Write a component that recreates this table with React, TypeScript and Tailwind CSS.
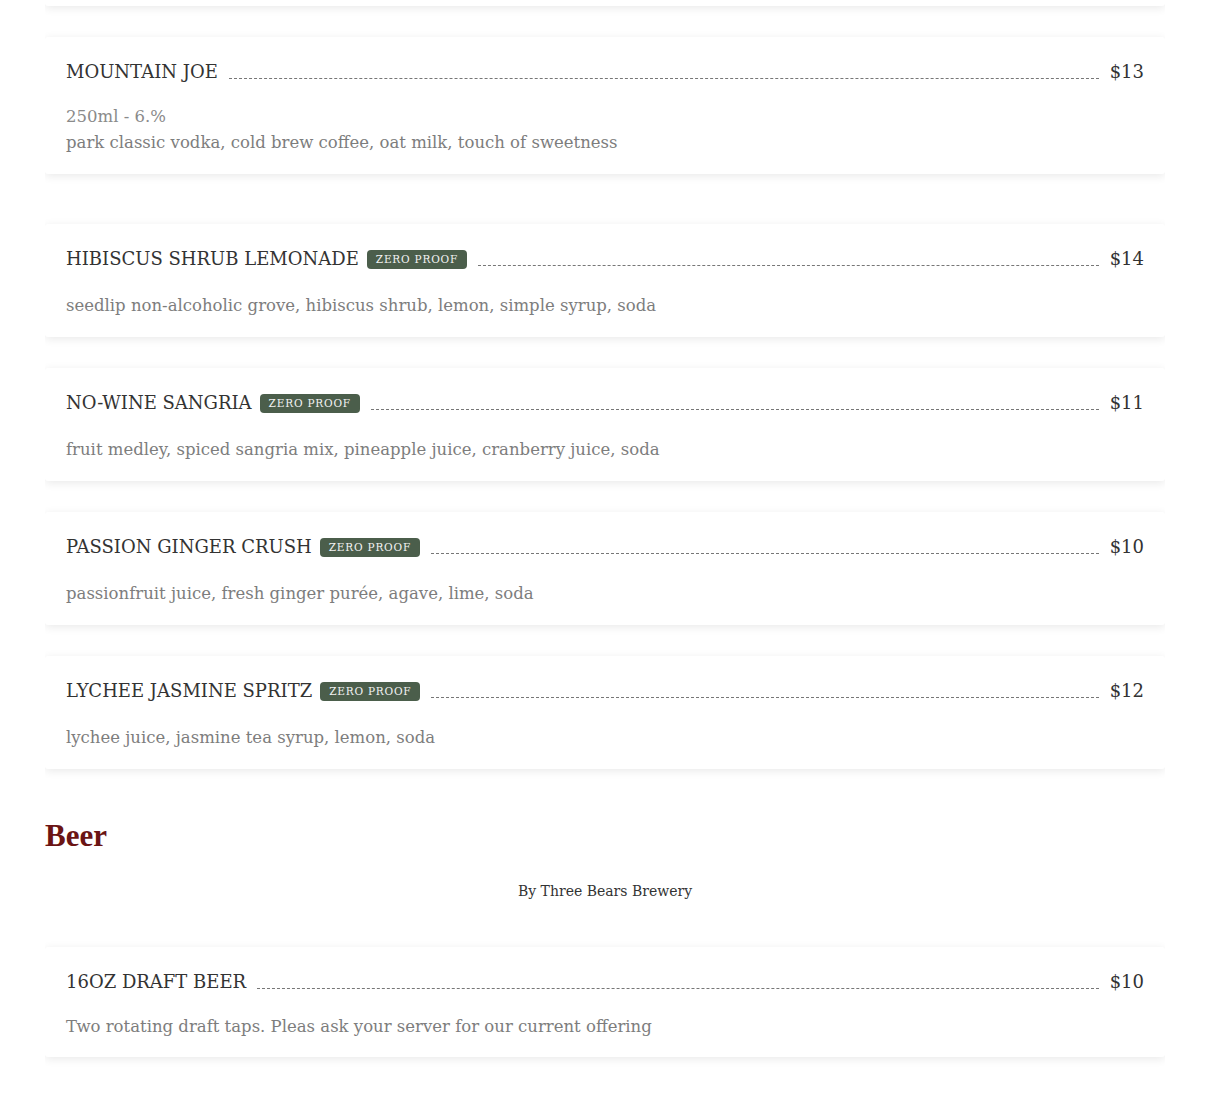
const slab = { fontFamily: '"DejaVu Serif", "Liberation Serif", serif' };

type Item = {
  name: string;
  price: string;
  desc: string;
  meta?: string;
  zero?: boolean;
  tight?: boolean;
};

const cocktails: Item[] = [
  {
    name: "Mountain Joe",
    price: "$13",
    meta: "250ml - 6.%",
    desc: "park classic vodka, cold brew coffee, oat milk, touch of sweetness",
  },
];

const zeroProof: Item[] = [
  {
    name: "Hibiscus Shrub Lemonade",
    price: "$14",
    zero: true,
    desc: "seedlip non-alcoholic grove, hibiscus shrub, lemon, simple syrup, soda",
  },
  {
    name: "No-Wine Sangria",
    price: "$11",
    zero: true,
    desc: "fruit medley, spiced sangria mix, pineapple juice, cranberry juice, soda",
  },
  {
    name: "Passion Ginger Crush",
    price: "$10",
    zero: true,
    desc: "passionfruit juice, fresh ginger purée, agave, lime, soda",
  },
  {
    name: "Lychee Jasmine Spritz",
    price: "$12",
    zero: true,
    desc: "lychee juice, jasmine tea syrup, lemon, soda",
  },
];

const beer: Item[] = [
  {
    name: "16oz Draft Beer",
    price: "$10",
    tight: true,
    desc: "Two rotating draft taps. Pleas ask your server for our current offering",
  },
];

function MenuCard({ item }: { item: Item }) {
  return (
    <div
      className={
        "rounded-[3px] bg-white px-[21px] pt-[23px] shadow-[0_2px_10px_rgba(0,0,0,0.09)] " +
        (item.tight ? "pb-[17px]" : "pb-[18px]")
      }
    >
      <div className="flex items-center">
        <h3 className="text-[18px] leading-6 uppercase text-[#333] whitespace-nowrap">
          {item.name}
        </h3>
        {item.zero && (
          <span className="ml-2 rounded-[4px] bg-[#4b5e4b] px-[9px] text-[10.5px] leading-[19px] tracking-[0.8px] uppercase text-[#f2f2f2] whitespace-nowrap">
            Zero Proof
          </span>
        )}
        <div className="mx-[11px] mt-3 h-0 flex-1 border-b border-dashed border-[#777]" />
        <span className="text-[18px] leading-6 text-[#333]">{item.price}</span>
      </div>
      <div className={item.meta ? "mt-[20px]" : item.tight ? "mt-[20px]" : "mt-[22px]"}>
        {item.meta && (
          <p className="text-[16.5px] leading-[26px] text-[#8a8a8a]">{item.meta}</p>
        )}
        <p className="text-[16.5px] leading-[26px] text-[#7d7d7d]">{item.desc}</p>
      </div>
    </div>
  );
}

export default function App() {
  return (
    <main className="min-h-[1112px] bg-white" style={slab}>
      <div className="mx-auto w-[1120px] overflow-hidden pb-[60px]">
        <div className="-mt-[140px] flex flex-col gap-[31px] pt-[8px]">
          <div className="h-[138px] rounded-[3px] bg-white shadow-[0_2px_10px_rgba(0,0,0,0.09)]" />
          {cocktails.map((it) => (
            <MenuCard key={it.name} item={it} />
          ))}
        </div>

        <div className="mt-[50px] flex flex-col gap-[31px]">
          {zeroProof.map((it) => (
            <MenuCard key={it.name} item={it} />
          ))}
        </div>

        <h2
          className="mt-[47px] text-[31px] leading-10 font-bold text-[#6b1414]"
          style={{ fontFamily: '"Liberation Serif", serif' }}
        >
          Beer
        </h2>
        <p className="mt-[23px] text-center text-[14px] leading-6 text-[#333]">
          By Three Bears Brewery
        </p>

        <div className="mt-[44px] flex flex-col gap-[30px]">
          {beer.map((it) => (
            <MenuCard key={it.name} item={it} />
          ))}
        </div>
      </div>
    </main>
  );
}
